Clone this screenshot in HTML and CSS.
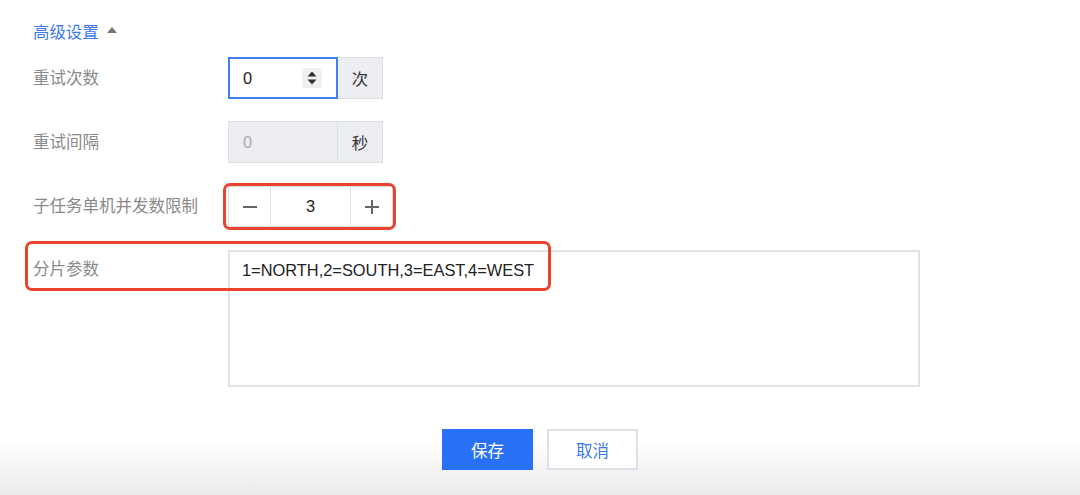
FILE: index.html
```html
<!DOCTYPE html>
<html lang="zh-CN">
<head>
  <meta charset="UTF-8">
  <meta name="viewport" content="width=device-width, initial-scale=1.0">
  <title>高级设置</title>
  <link rel="stylesheet" href="styles.css">
</head>
<body>
  <main class="form">
    <div class="form-title">
      <span>高级设置</span>
      <i class="caret"></i>
    </div>

    <div class="row">
      <label class="label">重试次数</label>
      <div class="group">
        <div class="input focused">
          <span class="value">0</span>
          <span class="spin">
            <svg width="12" height="16" viewBox="0 0 12 16"><path d="M6 1.5 L10.5 6.5 H1.5 Z M6 14.5 L10.5 9.5 H1.5 Z" fill="#333"/></svg>
          </span>
        </div>
        <span class="addon">次</span>
      </div>
    </div>

    <div class="row">
      <label class="label">重试间隔</label>
      <div class="group">
        <div class="input disabled"><span class="value">0</span></div>
        <span class="addon">秒</span>
      </div>
    </div>

    <div class="row">
      <label class="label">子任务单机并发数限制</label>
      <div class="stepper">
        <button class="step">
          <svg width="16" height="16" viewBox="0 0 16 16"><path d="M1 8 H15" stroke="#666" stroke-width="2"/></svg>
        </button>
        <span class="step-value">3</span>
        <button class="step">
          <svg width="16" height="16" viewBox="0 0 16 16"><path d="M1 8 H15 M8 1 V15" stroke="#666" stroke-width="2"/></svg>
        </button>
        <span class="mark mark-stepper"></span>
      </div>
    </div>

    <div class="row row-top">
      <label class="label">分片参数</label>
      <div class="textarea">1=NORTH,2=SOUTH,3=EAST,4=WEST</div>
      <span class="mark mark-shard"></span>
    </div>
  </main>

  <footer class="actions">
    <button class="btn primary">保存</button>
    <button class="btn">取消</button>
  </footer>
</body>
</html>
```

FILE: styles.css
```css
* {
  margin: 0;
  padding: 0;
  box-sizing: border-box;
}

html, body {
  height: 100%;
}

body {
  font-family: 'Liberation Sans', 'Noto Sans CJK SC', sans-serif;
  font-size: 16.4px;
  color: #222;
  background: linear-gradient(to bottom, #fff 0, #fff 440px, #ebebeb 495px);
}

.form {
  padding: 20px 0 0 33px;
}

.form-title {
  display: flex;
  align-items: center;
  height: 22px;
  color: #3d7bea;
  margin-bottom: 15px;
}

.caret {
  margin-left: 8px;
  width: 0;
  height: 0;
  border-left: 5px solid transparent;
  border-right: 5px solid transparent;
  border-bottom: 6px solid #777;
  margin-top: -2px;
}

.row {
  position: relative;
  display: flex;
  align-items: center;
  margin-bottom: 22px;
}

.row-top {
  align-items: flex-start;
}

.label {
  width: 195px;
  color: #8a8a8a;
  font-size: 16.5px;
  line-height: 22px;
}

.row-top .label {
  padding-top: 9px;
}

.group {
  display: flex;
  height: 42px;
}

.input {
  width: 110px;
  display: flex;
  align-items: center;
  justify-content: space-between;
  padding: 0 15px 0 14px;
  border: 1px solid #dcdfe6;
}

.input.focused {
  border: 2px solid #3f80f2;
  padding-left: 13px;
  padding-right: 14px;
}

.input.disabled {
  background: #eceef1;
  color: #aaa;
}

.spin {
  width: 20px;
  height: 20px;
  display: flex;
  align-items: center;
  justify-content: center;
  background: #f0f0f2;
  border-radius: 3px;
}

.addon {
  width: 45px;
  display: flex;
  align-items: center;
  justify-content: center;
  background: #eceef2;
  border: 1px solid #dcdfe6;
  border-left: none;
  color: #333;
}

.stepper {
  position: relative;
  display: flex;
  height: 41px;
  border: 1px solid #dcdfe6;
  margin-top: 1px;
}

.step {
  width: 41px;
  display: flex;
  align-items: center;
  justify-content: center;
  background: #fff;
  border: none;
}

.step-value {
  width: 81px;
  display: flex;
  align-items: center;
  justify-content: center;
  border-left: 1px solid #dcdfe6;
  border-right: 1px solid #dcdfe6;
}

.textarea {
  width: 692px;
  height: 137px;
  border: 2px solid #e1e3e8;
  padding: 7px 12px;
  line-height: 22px;
  margin-top: 1px;
}

.mark {
  position: absolute;
  border: 3px solid #e9432b;
  border-radius: 7px;
}

.mark-stepper {
  left: -6px;
  top: -4px;
  right: -4px;
  bottom: -4px;
}

.mark-shard {
  left: -8px;
  top: -8px;
  width: 526px;
  height: 50px;
}

.actions {
  display: flex;
  justify-content: center;
  gap: 14px;
  padding-top: 20px;
}

.btn {
  width: 91px;
  height: 41px;
  font-family: 'Liberation Sans', 'Noto Sans CJK SC', sans-serif;
  font-size: 16.5px;
  background: #fff;
  color: #3d7bea;
  border: 2px solid #dde1e8;
}

.btn.primary {
  background: #2870f6;
  color: #fff;
  border: none;
}
```
